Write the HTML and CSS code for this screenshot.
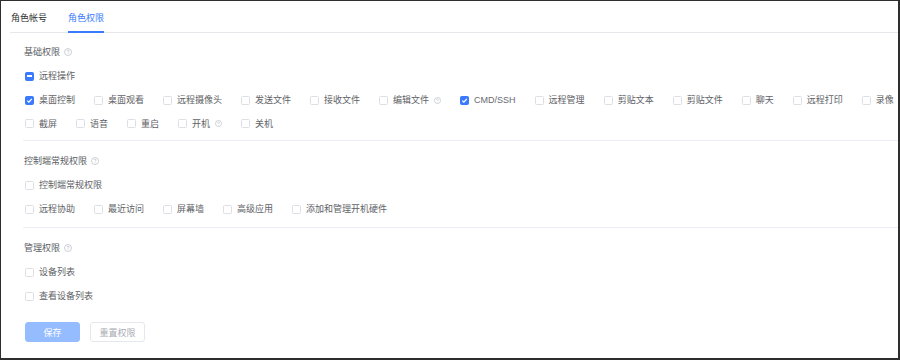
FILE: index.html
```html
<!DOCTYPE html>
<html lang="zh-CN">
<head>
<meta charset="utf-8">
<link rel="stylesheet" href="styles.css">
</head>
<body>
<div class="frame">
  <div class="tabs">
    <div class="tab">角色帐号</div>
    <div class="tab active">角色权限</div>
  </div>
  <div class="content">
    <section class="sec first">
      <div class="title">基础权限 <span class="q"><svg viewBox="0 0 8 8" width="8" height="8"><circle cx="4" cy="4" r="3.5" fill="none" stroke="#c0c4cc" stroke-width="0.8"/><path d="M2.9 3.1 C2.9 2.4 3.4 2.1 4 2.1 C4.6 2.1 5.1 2.5 5.1 3 C5.1 3.7 4.1 3.8 4.1 4.6" fill="none" stroke="#c0c4cc" stroke-width="0.8"/><circle cx="4.1" cy="5.8" r="0.45" fill="#c0c4cc"/></svg></span></div>
      <div class="row"><label class="cb"><span class="box ind"><i></i></span>远程操作</label></div>
      <div class="row">
        <label class="cb"><span class="box on"><svg viewBox="0 0 9 9" width="9" height="9"><path d="M2.3 4.6 L3.9 6.1 L6.8 2.9" fill="none" stroke="#fff" stroke-width="1.3"/></svg></span>桌面控制</label>
        <label class="cb"><span class="box"></span>桌面观看</label>
        <label class="cb"><span class="box"></span>远程摄像头</label>
        <label class="cb"><span class="box"></span>发送文件</label>
        <label class="cb"><span class="box"></span>接收文件</label>
        <label class="cb"><span class="box"></span>编辑文件<span class="q qi"><svg viewBox="0 0 8 8" width="7" height="7"><circle cx="4" cy="4" r="3.5" fill="none" stroke="#c0c4cc" stroke-width="0.8"/><path d="M2.9 3.1 C2.9 2.4 3.4 2.1 4 2.1 C4.6 2.1 5.1 2.5 5.1 3 C5.1 3.7 4.1 3.8 4.1 4.6" fill="none" stroke="#c0c4cc" stroke-width="0.8"/><circle cx="4.1" cy="5.8" r="0.45" fill="#c0c4cc"/></svg></span></label>
        <label class="cb"><span class="box on"><svg viewBox="0 0 9 9" width="9" height="9"><path d="M2.3 4.6 L3.9 6.1 L6.8 2.9" fill="none" stroke="#fff" stroke-width="1.3"/></svg></span><span class="latin">CMD/SSH</span></label>
        <label class="cb"><span class="box"></span>远程管理</label>
        <label class="cb"><span class="box"></span>剪贴文本</label>
        <label class="cb"><span class="box"></span>剪贴文件</label>
        <label class="cb"><span class="box"></span>聊天</label>
        <label class="cb"><span class="box"></span>远程打印</label>
        <label class="cb"><span class="box"></span>录像</label>
      </div>
      <div class="row short">
        <label class="cb"><span class="box"></span>截屏</label>
        <label class="cb"><span class="box"></span>语音</label>
        <label class="cb"><span class="box"></span>重启</label>
        <label class="cb"><span class="box"></span>开机<span class="q qi"><svg viewBox="0 0 8 8" width="7" height="7"><circle cx="4" cy="4" r="3.5" fill="none" stroke="#c0c4cc" stroke-width="0.8"/><path d="M2.9 3.1 C2.9 2.4 3.4 2.1 4 2.1 C4.6 2.1 5.1 2.5 5.1 3 C5.1 3.7 4.1 3.8 4.1 4.6" fill="none" stroke="#c0c4cc" stroke-width="0.8"/><circle cx="4.1" cy="5.8" r="0.45" fill="#c0c4cc"/></svg></span></label>
        <label class="cb"><span class="box"></span>关机</label>
      </div>
    </section>
    <section class="sec mid">
      <div class="title">控制端常规权限 <span class="q"><svg viewBox="0 0 8 8" width="8" height="8"><circle cx="4" cy="4" r="3.5" fill="none" stroke="#c0c4cc" stroke-width="0.8"/><path d="M2.9 3.1 C2.9 2.4 3.4 2.1 4 2.1 C4.6 2.1 5.1 2.5 5.1 3 C5.1 3.7 4.1 3.8 4.1 4.6" fill="none" stroke="#c0c4cc" stroke-width="0.8"/><circle cx="4.1" cy="5.8" r="0.45" fill="#c0c4cc"/></svg></span></div>
      <div class="row"><label class="cb"><span class="box"></span>控制端常规权限</label></div>
      <div class="row">
        <label class="cb"><span class="box"></span>远程协助</label>
        <label class="cb"><span class="box"></span>最近访问</label>
        <label class="cb"><span class="box"></span>屏幕墙</label>
        <label class="cb"><span class="box"></span>高级应用</label>
        <label class="cb"><span class="box"></span>添加和管理开机硬件</label>
      </div>
    </section>
    <section class="sec last">
      <div class="title">管理权限 <span class="q"><svg viewBox="0 0 8 8" width="8" height="8"><circle cx="4" cy="4" r="3.5" fill="none" stroke="#c0c4cc" stroke-width="0.8"/><path d="M2.9 3.1 C2.9 2.4 3.4 2.1 4 2.1 C4.6 2.1 5.1 2.5 5.1 3 C5.1 3.7 4.1 3.8 4.1 4.6" fill="none" stroke="#c0c4cc" stroke-width="0.8"/><circle cx="4.1" cy="5.8" r="0.45" fill="#c0c4cc"/></svg></span></div>
      <div class="row"><label class="cb"><span class="box"></span>设备列表</label></div>
      <div class="row"><label class="cb"><span class="box"></span>查看设备列表</label></div>
    </section>
    <div class="actions">
      <button class="btn primary">保存</button>
      <button class="btn plain">重置权限</button>
    </div>
  </div>
</div>
</body>
</html>
```
FILE: styles.css
```css
* { box-sizing: border-box; }
html, body { margin: 0; padding: 0; background: #fff; }
body {
  font-family: "Liberation Sans", "Noto Sans CJK SC", sans-serif;
  font-size: 9px;
  color: #606266;
}
.frame {
  width: 900px;
  height: 360px;
  border-style: solid;
  border-color: #2e2e2e;
  border-width: 1px 2px 2px 1px;
  overflow: hidden;
}
.tabs {
  display: flex;
  margin-left: 9px;
  height: 32px;
  border-bottom: 1px solid #e7e8eb;
}
.tab {
  position: relative;
  padding-top: 3px;
  line-height: 28px;
  margin-left: 1px;
  margin-right: 20px;
  color: #303133;
}
.tab.active { color: #3a7afe; }
.tab.active::after {
  content: "";
  position: absolute;
  left: 0;
  right: 0;
  bottom: -1px;
  height: 2px;
  background: #3a7afe;
}
.content { padding-left: 22px; }
.sec { border-bottom: 1px solid #ebeef5; }
.sec.first { padding-top: 7px; padding-bottom: 5px; }
.sec.mid { padding-top: 8px; padding-bottom: 6px; }
.sec.last { border-bottom: none; padding-top: 8px; }
.title {
  height: 24px;
  line-height: 24px;
  display: flex;
  align-items: center;
  padding-left: 1px;
  color: #5a5d63;
}
.q { display: inline-flex; margin-left: 4px; }
.q svg { display: block; }
.row {
  display: flex;
  height: 24px;
  align-items: center;
  gap: 19px;
  padding-left: 2px;
}
.row.short { height: 23px; }
.cb {
  display: flex;
  align-items: center;
  white-space: nowrap;
  line-height: 12px;
}
.box {
  width: 9px;
  height: 9px;
  border: 1px solid #dcdfe6;
  border-radius: 1.5px;
  margin-right: 5px;
  background: #fff;
  display: flex;
  align-items: center;
  justify-content: center;
  flex: none;
}
.box.on, .box.ind { background: #3a7afe; border-color: #3a7afe; }
.box.on svg { display: block; margin: -1px; }
.box.ind i { display: block; width: 5px; height: 1.5px; background: #fff; }
.qi { margin-left: 5px; }
.latin { color: #666a70; }
.actions { display: flex; gap: 10px; margin-top: 14px; padding-left: 2px; }
.btn {
  width: 55px;
  height: 20px;
  border-radius: 3px;
  font-family: inherit;
  font-size: 9px;
  padding: 0;
  display: flex;
  align-items: center;
  justify-content: center;
}
.btn.primary { background: #94bcff; border: 1px solid #94bcff; color: #fff; }
.btn.plain { background: #fff; border: 1px solid #e4e7ed; color: #a8abb2; }
```
